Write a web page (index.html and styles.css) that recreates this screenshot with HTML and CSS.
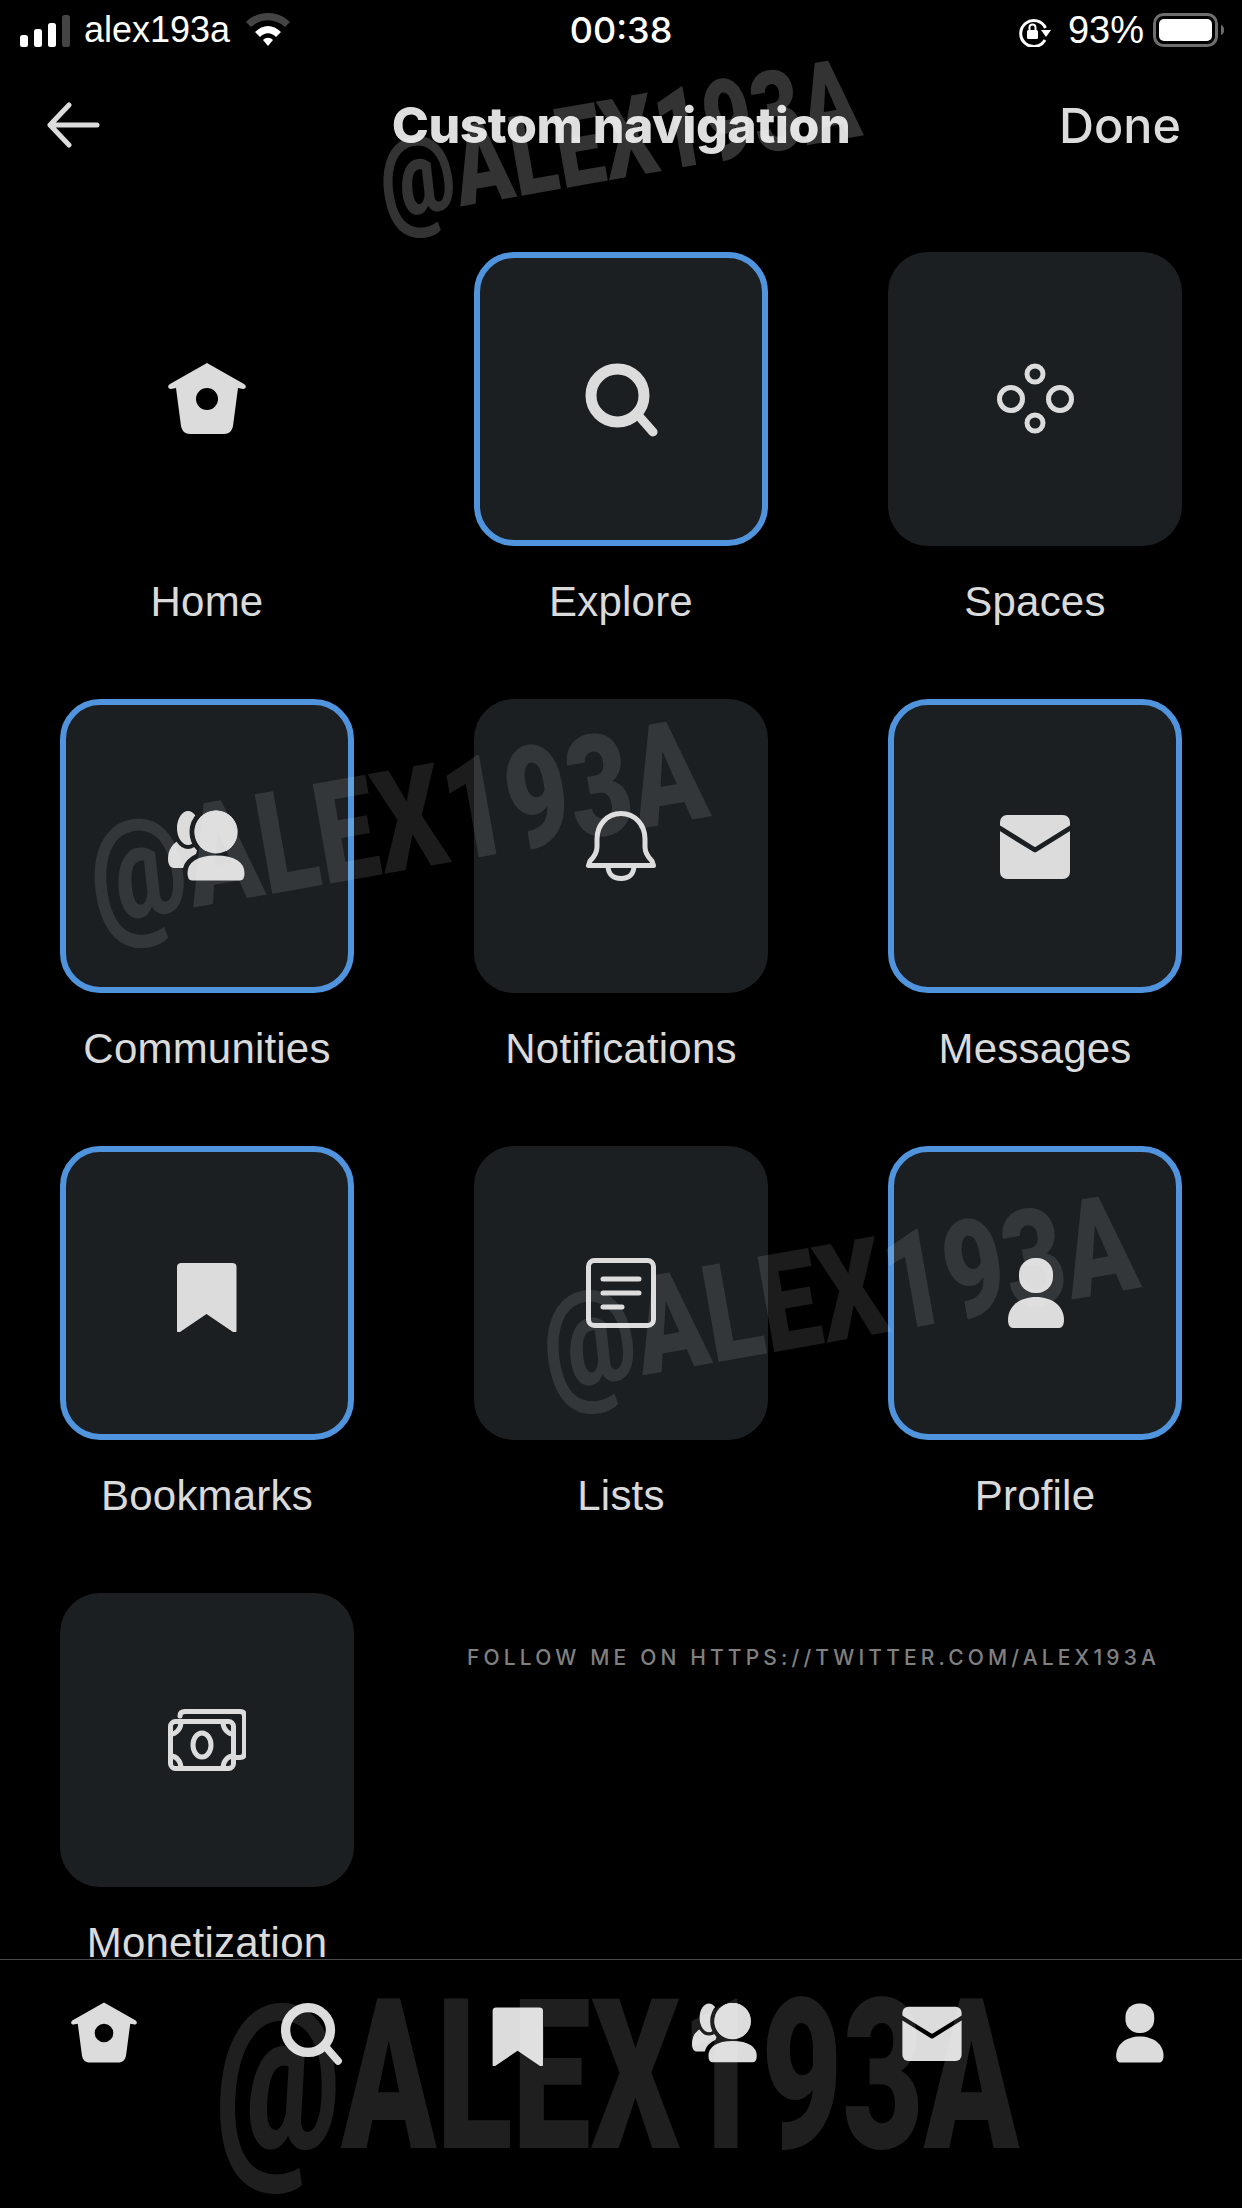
FILE: index.html
```html
<!DOCTYPE html>
<html lang="en">
<head>
<meta charset="utf-8">
<title>Custom navigation</title>
<link rel="stylesheet" href="styles.css">
</head>
<body>
<svg class="defs" width="0" height="0" aria-hidden="true">
  <symbol id="i-home" viewBox="0 0 78 78">
    <path class="fill" fill-rule="evenodd" d="M39 3 L76 24 C79 26 78 29 75 29 L70 28 L65 66 C64 71 61 74 56 74 H22 C17 74 14 71 13 66 L8 28 L3 29 C0 29 -1 26 2 24 Z M39 28 A11 11 0 1 0 39 50 A11 11 0 1 0 39 28 Z"/>
  </symbol>
  <symbol id="i-search" viewBox="0 0 78 78">
    <circle class="line" cx="35.500" cy="35.500" r="26.500" stroke-width="11"/>
    <path class="line" d="M56 55 L71 72" stroke-width="9"/>
  </symbol>
  <symbol id="i-spaces" viewBox="0 0 78 78">
    <circle class="line" cx="15" cy="39" r="11.500" stroke-width="5"/>
    <circle class="line" cx="64" cy="39" r="11.500" stroke-width="5"/>
    <circle class="line" cx="39" cy="14" r="8" stroke-width="5"/>
    <circle class="line" cx="39" cy="63" r="8" stroke-width="5"/>
  </symbol>
  <symbol id="i-communities" viewBox="0 0 78 78">
    <path class="fill" d="M0 52 C0 42 5 36 12 33 L30 40 L24 61 H6 C2 61 0 57 0 52 Z"/>
    <ellipse class="fill gap" cx="20" cy="21" rx="13" ry="19" stroke-width="4"/>
    <ellipse class="fill gap" cx="48" cy="25" rx="24" ry="24" stroke-width="5"/>
    <path class="fill gap" d="M17 66 C17 54 28 46 48 46 C68 46 79 54 79 66 C79 72 77 76 72 76 H24 C19 76 17 72 17 66 Z" stroke-width="5"/>
    <ellipse class="fill" cx="48" cy="25" rx="21.500" ry="21.500"/>
  </symbol>
  <symbol id="i-bell" viewBox="0 0 78 78">
    <path class="line" stroke-width="5" d="M39 6.500 C25 6.500 15 18 15 32 V40 C15 46 12 50 8 54 L6.500 58.500 H71.500 L70 54 C66 50 63 46 63 40 V32 C63 18 53 6.500 39 6.500 Z"/>
    <path class="line" stroke-width="5" d="M26 58.500 C26 67 31 71.500 39 71.500 C47 71.500 52 67 52 58.500"/>
  </symbol>
  <symbol id="i-mail" viewBox="0 0 78 78">
    <rect class="fill" x="4" y="8" width="70" height="64" rx="7"/>
    <path class="gap-line" stroke-width="5" d="M2 20 L39 43 L76 20"/>
  </symbol>
  <symbol id="i-bookmark" viewBox="0 0 78 78">
    <path class="fill" d="M9 13 C9 10 11 9 13 9 H64 C67 9 68.500 10 68.500 13 V76 C68.500 79 67 80 65 78 L38.500 60 L12 78 C10 80 9 79 9 76 Z"/>
  </symbol>
  <symbol id="i-lists" viewBox="0 0 78 78">
    <rect class="line" x="6.500" y="6.500" width="65" height="65" rx="6" stroke-width="5"/>
    <path class="line" stroke-width="5" d="M21 25 H57 M21 39 H57 M21 53 H40"/>
  </symbol>
  <symbol id="i-profile" viewBox="0 0 78 78">
    <rect class="fill" x="23" y="4" width="34" height="35" rx="16"/>
    <path class="fill" d="M12 66 C12 52 24 43 40 43 C56 43 68 52 68 66 C68 71 66 74 63 74 H17 C14 74 12 71 12 66 Z"/>
  </symbol>
  <symbol id="i-money" viewBox="0 0 78 78">
    <path class="line" stroke-width="5" d="M12 15 C12 12 14 10.500 17 10.500 H72 C75 10.500 76.500 12 76.500 15 V52 C76.500 55 75 56.500 72 56.500 H66"/>
    <rect class="line" x="2.500" y="20.500" width="63" height="47" rx="5" stroke-width="5"/>
    <ellipse class="line" cx="34" cy="44" rx="9" ry="12" stroke-width="5"/>
    <path class="line" stroke-width="5" d="M3 33 C8 33 13 28 13 21 M65 33 C60 33 55 28 55 21 M3 55 C8 55 13 60 13 67 M65 55 C60 55 55 60 55 67"/>
  </symbol>
</svg>

<div class="screen">
  <div class="status">
    <div class="status-left">
      <svg class="signal" viewBox="0 0 52 32" width="52" height="32">
        <rect class="bar" x="0" y="20" width="8" height="12" rx="2.500"/>
        <rect class="bar" x="14" y="14" width="8" height="18" rx="2.500"/>
        <rect class="bar" x="28" y="8" width="8" height="24" rx="2.500"/>
        <rect class="bar-off" x="42" y="0" width="8" height="32" rx="2.500"/>
      </svg>
      <span class="carrier">alex193a</span>
      <svg class="wifi" viewBox="0 0 44 33" width="44" height="33">
        <path class="wifi-off" d="M0 9 C12 -3 32 -3 44 9 L39 14 C29 5 15 5 5 14 Z"/>
        <path class="wifi-on" d="M9 19 C17 11 27 11 35 19 L30 24 C25 19 19 19 14 24 Z"/>
        <path class="wifi-on" d="M17 27 C20 24 24 24 27 27 L22 33 Z"/>
      </svg>
    </div>
    <div class="clock">00:38</div>
    <div class="status-right">
      <svg class="lock" viewBox="0 0 34 30" width="34" height="30">
        <path class="lock-ring" d="M27 23 A13 13 0 1 1 27.500 11"/>
        <path class="lock-fill" d="M23 13 H33 L28 20 Z"/>
        <rect class="lock-fill" x="9" y="13" width="11" height="9" rx="1.500"/>
        <path class="lock-ring thin" d="M11.500 13 V10.500 A3 3 0 0 1 17.500 10.500 V13"/>
      </svg>
      <span class="percent">93%</span>
      <svg class="battery" viewBox="0 0 73 34" width="73" height="34">
        <rect class="batt-shell" x="1.500" y="1.500" width="62" height="31" rx="9"/>
        <rect class="batt-level" x="6" y="6" width="53" height="22" rx="5"/>
        <path class="batt-tip" d="M68 12 C72 13 72 21 68 22 Z"/>
      </svg>
    </div>
  </div>

  <header class="navbar">
    <svg class="back" viewBox="0 0 54 46" width="54" height="46">
      <path class="back-line" d="M4 23 H51 M23 3 L4 23 L23 43"/>
    </svg>
    <h1 class="title">Custom navigation</h1>
    <span class="done">Done</span>
  </header>

  <main class="content">
    <div class="grid">
      <div class="item"><div class="tile tile-plain"><svg class="icon"><use href="#i-home"/></svg></div><div class="label">Home</div></div>
      <div class="item"><div class="tile is-on"><svg class="icon"><use href="#i-search"/></svg></div><div class="label">Explore</div></div>
      <div class="item"><div class="tile"><svg class="icon"><use href="#i-spaces"/></svg></div><div class="label">Spaces</div></div>
      <div class="item"><div class="tile is-on"><svg class="icon"><use href="#i-communities"/></svg></div><div class="label">Communities</div></div>
      <div class="item"><div class="tile"><svg class="icon"><use href="#i-bell"/></svg></div><div class="label">Notifications</div></div>
      <div class="item"><div class="tile is-on"><svg class="icon"><use href="#i-mail"/></svg></div><div class="label">Messages</div></div>
      <div class="item"><div class="tile is-on"><svg class="icon"><use href="#i-bookmark"/></svg></div><div class="label">Bookmarks</div></div>
      <div class="item"><div class="tile"><svg class="icon"><use href="#i-lists"/></svg></div><div class="label">Lists</div></div>
      <div class="item"><div class="tile is-on"><svg class="icon"><use href="#i-profile"/></svg></div><div class="label">Profile</div></div>
      <div class="item"><div class="tile"><svg class="icon"><use href="#i-money"/></svg></div><div class="label">Monetization</div></div>
    </div>
  </main>

  <nav class="tabbar">
    <svg class="tab-icon"><use href="#i-home"/></svg>
    <svg class="tab-icon"><use href="#i-search"/></svg>
    <svg class="tab-icon"><use href="#i-bookmark"/></svg>
    <svg class="tab-icon"><use href="#i-communities"/></svg>
    <svg class="tab-icon"><use href="#i-mail"/></svg>
    <svg class="tab-icon"><use href="#i-profile"/></svg>
  </nav>

  <div class="wm wm-top">@ALEX193A</div>
  <div class="wm wm-mid">@ALEX193A</div>
  <div class="wm wm-low">@ALEX193A</div>
  <div class="wm wm-bottom">@ALEX193A</div>
  <div class="follow">FOLLOW ME ON HTTPS://TWITTER.COM/ALEX193A</div>
</div>
</body>
</html>
```
FILE: styles.css
```css
* { box-sizing: border-box; }
html, body { margin: 0; padding: 0; background: #000; }
body { font-family: "Liberation Sans", Arial, sans-serif; color: #dcdcdc; }
.defs { position: absolute; }

.screen {
  --gap: #1c1f22;
  position: relative;
  width: 1242px;
  height: 2208px;
  display: flex;
  flex-direction: column;
  overflow: hidden;
  background: #000;
}

/* status bar */
.status {
  height: 60px;
  flex: none;
  display: grid;
  grid-template-columns: 1fr auto 1fr;
  align-items: center;
  padding: 0 20px;
  color: #fff;
}
.status-left { display: flex; align-items: center; gap: 12px; }
.status-right { display: flex; align-items: center; justify-content: flex-end; gap: 9px; }
.carrier { font-size: 36px; }
.percent { font-size: 38px; }
.clock { font-family: "Inter", sans-serif; font-size: 36px; font-weight: 500; }
.signal { margin-top: 2px; }
.wifi { margin-left: 4px; margin-top: -1px; }
.lock { margin-right: 7px; margin-top: 4px; }
.battery { margin-right: -4px; }
.bar { fill: #fff; }
.bar-off { fill: #444; }
.wifi-on { fill: #fff; }
.wifi-off { fill: #444; }
.lock-ring { fill: none; stroke: #fff; stroke-width: 3; }
.lock-ring.thin { stroke-width: 2; }
.lock-fill { fill: #fff; }
.batt-shell { fill: none; stroke: #6e6e6e; stroke-width: 3; }
.batt-level { fill: #fff; }
.batt-tip { fill: #6e6e6e; }

/* header */
.navbar {
  height: 132px;
  flex: none;
  display: grid;
  grid-template-columns: 1fr auto 1fr;
  align-items: center;
  padding: 0 61px 2px;
}
.back { display: block; margin-left: -15px; }
.back-line { fill: none; stroke: #dcdcdc; stroke-width: 5; stroke-linecap: round; stroke-linejoin: round; }
.title { margin: 0; font-family: "Inter", sans-serif; font-size: 50px; font-weight: 800; letter-spacing: -0.5px; color: #dedede; }
.done { justify-self: end; font-family: "Inter", sans-serif; font-size: 48.500px; font-weight: 500; color: #dcdcdc; }

/* grid */
.content { flex: 1; min-height: 0; overflow: hidden; padding: 60px 60px 0; }
.grid {
  display: grid;
  grid-template-columns: repeat(3, 294px);
  column-gap: 120px;
  row-gap: 72px;
}
.item { display: flex; flex-direction: column; align-items: center; }
.tile {
  width: 294px;
  height: 294px;
  border-radius: 40px;
  background: #1c1f22;
  display: flex;
  align-items: center;
  justify-content: center;
}
.tile-plain { background: transparent; --gap: #000; }
.tile.is-on { border: 6px solid #4f94dc; }
.label { margin-top: 31px; font-size: 42px; letter-spacing: 0.2px; line-height: 50px; height: 50px; color: #dadada; white-space: nowrap; }

/* icons */
.icon { width: 78px; height: 78px; overflow: visible; display: block; }
.fill { fill: #dcdcdc; }
.line { fill: none; stroke: #dcdcdc; stroke-linecap: round; stroke-linejoin: round; }
.gap { stroke: var(--gap); }
.gap-line { fill: none; stroke: var(--gap); stroke-linejoin: round; }

/* tab bar */
.tabbar {
  --gap: #000;
  height: 249px;
  flex: none;
  border-top: 1px solid #4a4a4a;
  display: grid;
  grid-template-columns: repeat(6, 1fr);
  justify-items: center;
  align-items: start;
  padding-top: 40px;
}
.tab-icon { width: 66px; height: 66px; overflow: visible; display: block; }

/* overlaid watermarks */
.wm {
  position: absolute;
  font-family: "Roboto", sans-serif;
  font-weight: 900;
  white-space: nowrap;
  line-height: 1;
  color: rgba(255, 255, 255, 0.11);
  transform-origin: center;
}
.wm-top { left: 297px; top: 84px; font-size: 112px; color: rgba(255,255,255,0.2); transform: rotate(-10deg) scaleX(0.755); }
.wm-mid { left: -11px; top: 752px; font-size: 142px; transform: rotate(-10deg) scaleX(0.765); }
.wm-low { left: 448px; top: 1226px; font-size: 136px; transform: rotate(-10deg) scaleX(0.77); }
.wm-bottom { left: 15px; top: 1971px; font-size: 210px; color: rgba(255,255,255,0.12); transform: scaleX(0.667); }
.follow {
  position: absolute;
  left: 467px;
  top: 1645px;
  font-family: "Inter", sans-serif;
  font-weight: 500;
  font-size: 21px;
  line-height: 25px;
  letter-spacing: 4.15px;
  color: #808080;
  white-space: nowrap;
}
```
